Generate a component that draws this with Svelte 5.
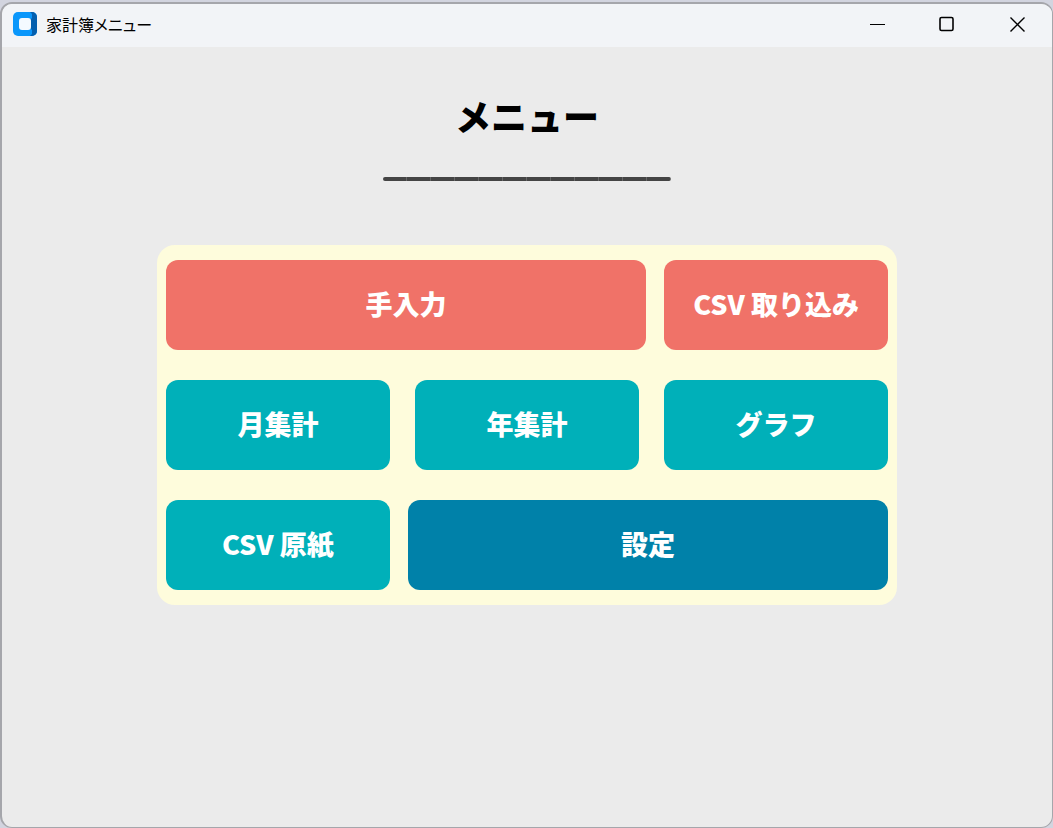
<script lang="ts">
  type Tone = "input" | "report" | "config";

  interface MenuItem {
    label: string;
    tone: Tone;
    wide?: boolean;
  }

  const rows: MenuItem[][] = [
    [
      { label: "手入力", tone: "input", wide: true },
      { label: "CSV 取り込み", tone: "input" },
    ],
    [
      { label: "月集計", tone: "report" },
      { label: "年集計", tone: "report" },
      { label: "グラフ", tone: "report" },
    ],
    [
      { label: "CSV 原紙", tone: "report" },
      { label: "設定", tone: "config", wide: true },
    ],
  ];
</script>

<div class="window">
  <header class="titlebar">
    <svg class="logo" viewBox="0 0 24 24" aria-hidden="true">
      <rect width="24" height="24" rx="5" fill="#0a97fb" />
      <path d="M17 0h2a5 5 0 0 1 5 5v14a5 5 0 0 1-5 5h-2l2-2v-4l-2-2V8l2-2V2z" fill="#045fae" />
      <rect x="6" y="6" width="12" height="12" rx="3" fill="#f4faff" />
    </svg>
    <span class="caption">家計簿メニュー</span>
    <div class="controls">
      <button aria-label="最小化">
        <svg viewBox="0 0 16 16"><path d="M1 8.5h15" /></svg>
      </button>
      <button aria-label="最大化">
        <svg viewBox="0 0 16 16"><rect x="1" y="1.5" width="13" height="13" rx="1.5" stroke-width="1.6" /></svg>
      </button>
      <button aria-label="閉じる">
        <svg viewBox="0 0 16 16"><path d="M1.5 1.5l14 14M15.5 1.5l-14 14" stroke-width="1.4" /></svg>
      </button>
    </div>
  </header>

  <main>
    <h1>メニュー</h1>
    <hr />
    <nav class="panel">
      {#each rows as row}
        <div class="row">
          {#each row as item}
            <button class="item {item.tone}" class:wide={item.wide}>{item.label}</button>
          {/each}
        </div>
      {/each}
    </nav>
  </main>
</div>

<style>
  :global(body) {
    background: #d2d4df;
  }
  .window {
    box-sizing: border-box;
    display: flex;
    flex-direction: column;
    min-height: calc(100vh - 2px);
    margin-top: 2px;
    border: solid #a5a6ab;
    border-width: 2px 1px 1px 2px;
    border-radius: 12px;
    background: #ebebeb;
    overflow: hidden;
    font-family: "Noto Sans CJK JP", sans-serif;
  }
  .titlebar {
    box-sizing: border-box;
    display: flex;
    align-items: center;
    height: 43px;
    padding: 0 0 4px 11px;
    background: #f2f4f7;
  }
  .logo {
    width: 24px;
    height: 24px;
    margin-right: 9px;
  }
  .caption {
    font-size: 16px;
    font-weight: 400;
    line-height: 24px;
    font-feature-settings: "palt";
    color: #000;
  }
  .controls {
    display: flex;
    margin-left: auto;
  }
  .controls button {
    display: grid;
    place-items: center;
    width: 70px;
    height: 39px;
    padding: 0;
    border: 0;
    background: none;
  }
  .controls svg {
    width: 16px;
    height: 16px;
    fill: none;
    stroke: #000;
  }
  main {
    display: flex;
    flex-direction: column;
    align-items: center;
    padding: 42px 24px;
  }
  h1 {
    margin: 0;
    font-size: 36px;
    font-weight: 900;
    line-height: 52px;
    color: #000;
  }
  /* twelve joined dashes with a faint notch between them */
  hr {
    width: 288px;
    height: 4px;
    margin: 36px 0 64px;
    border: 0;
    border-radius: 2px;
    background: repeating-linear-gradient(90deg, #444 0 23px, #666 23px 24px);
  }
  .panel {
    box-sizing: border-box;
    display: flex;
    flex-direction: column;
    gap: 30px;
    width: 100%;
    max-width: 740px;
    padding: 15px 9px;
    border-radius: 18px;
    background: #fefcdc;
  }
  .row {
    display: flex;
    justify-content: space-between;
  }
  .item {
    width: 31%;
    height: 90px;
    padding: 0 0 2px;
    border: 0;
    border-radius: 12px;
    font-family: inherit;
    font-size: 27px;
    font-weight: 900;
    line-height: 40px;
    color: #fff;
  }
  .wide {
    width: 66.5%;
  }
  .input {
    background: #f07268;
  }
  .report {
    background: #00b0b9;
  }
  .config {
    background: #0081a9;
  }
</style>
